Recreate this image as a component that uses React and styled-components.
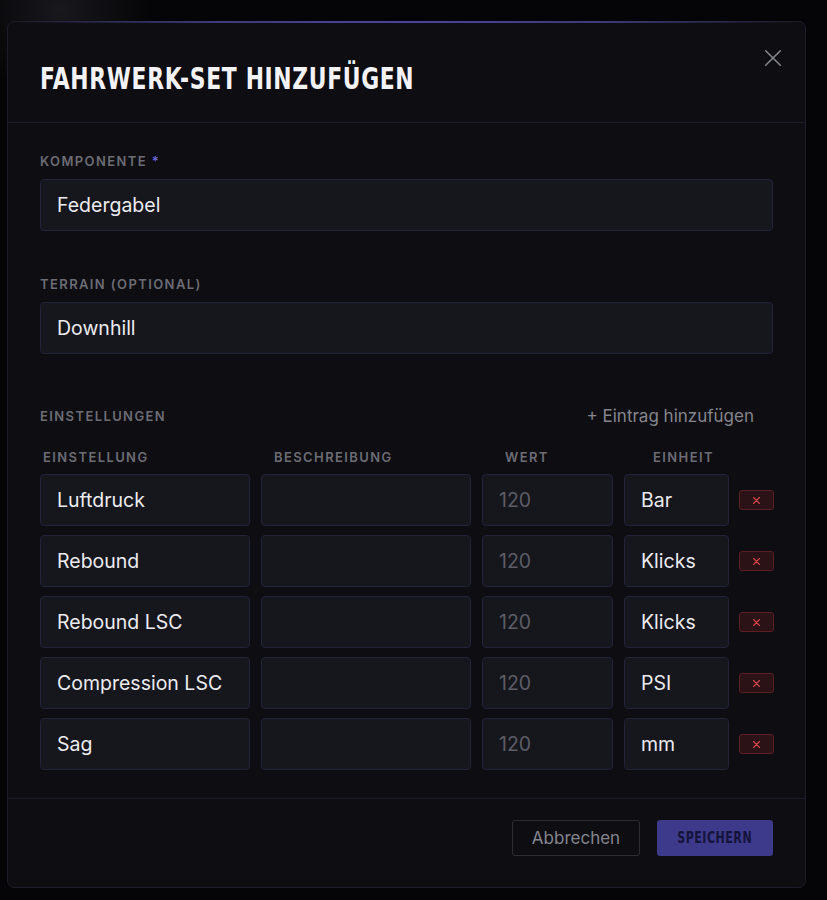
import { createGlobalStyle, styled } from "styled-components";

const GlobalStyle = createGlobalStyle`
  html, body {
    margin: 0;
    padding: 0;
    background: #050507;
    font-family: Inter, "Noto Sans", sans-serif;
  }
`;

const Page = styled.div`
  width: 827px;
  height: 900px;
  padding: 21px 21px 0 7px;
  box-sizing: border-box;
  background: radial-gradient(circle at 60px 10px, rgba(60, 60, 70, 0.35), transparent 90px), #050507;
`;

const Modal = styled.div`
  position: relative;
  width: 799px;
  height: 867px;
  box-sizing: border-box;
  background: #0d0d12;
  border: 1px solid #1d1d29;
  border-radius: 7px;
  display: flex;
  flex-direction: column;

  &::before {
    content: "";
    position: absolute;
    top: -1px;
    left: 10px;
    right: 10px;
    height: 2px;
    background: linear-gradient(90deg, transparent, #3f3a7a 25%, #4a44a0 50%, #3f3a7a 75%, transparent);
  }
`;

const Header = styled.div`
  flex-shrink: 0;
  height: 100px;
  padding: 0 32px;
  display: flex;
  align-items: center;
  justify-content: space-between;
  border-bottom: 1px solid #1c1c2a;
`;

const Title = styled.h1`
  margin: 0;
  padding-top: 12px;
  font-family: "DejaVu Sans Condensed", "Liberation Sans", sans-serif;
  font-weight: 700;
  font-size: 30px;
  letter-spacing: 0.8px;
  color: #f3f3f6;
  text-transform: uppercase;
  transform: scaleX(0.81);
  transform-origin: left center;
  white-space: nowrap;
`;

const Close = styled.button`
  align-self: flex-start;
  margin-top: 25px;
  margin-right: -11px;
  width: 22px;
  height: 22px;
  padding: 0;
  border: none;
  background: none;
  display: flex;
  align-items: center;
  justify-content: center;
`;

const Body = styled.div`
  flex-shrink: 0;
  padding: 31px 32px 28px;
  display: flex;
  flex-direction: column;
  border-bottom: 1px solid #1c1c2a;
`;

const Field = styled.div`
  display: flex;
  flex-direction: column;
  gap: 11px;
  margin-bottom: ${(p) => p.$mb || 0}px;
`;

const Label = styled.div`
  font-size: 13px;
  font-weight: 600;
  letter-spacing: 1.4px;
  color: #6c6c74;
  text-transform: uppercase;
  line-height: 14px;
`;

const Star = styled.span`
  color: #6d68d8;
`;

const Input = styled.div`
  height: 52px;
  box-sizing: border-box;
  padding: 0 16px;
  display: flex;
  align-items: center;
  background: #16161d;
  border: 1px solid #22223a;
  border-radius: 4px;
  font-size: 19.5px;
  color: ${(p) => (p.$muted ? "#5d5d66" : "#ececf0")};
`;

const SectionHead = styled.div`
  display: flex;
  justify-content: space-between;
  align-items: center;
  margin-bottom: 24px;
`;

const AddLink = styled.button`
  border: none;
  background: none;
  padding: 0 19px 0 0;
  font-family: Inter, sans-serif;
  font-size: 17px;
  color: #85858e;
`;

const Grid = styled.div`
  display: grid;
  grid-template-columns: 210px 210px 131px 105px 35px;
  column-gap: 11px;
  row-gap: 9px;
  align-items: center;
`;

const ColHead = styled.div`
  padding-left: ${(p) => p.$pl}px;
  font-size: 13px;
  font-weight: 600;
  letter-spacing: 1.4px;
  color: #6c6c74;
  line-height: 14px;
  margin-bottom: 1px;
`;

const DeleteBtn = styled.button`
  width: 35px;
  height: 20px;
  padding: 0;
  background: #2a1216;
  border: 1px solid #5c1f26;
  border-radius: 3px;
  display: flex;
  align-items: center;
  justify-content: center;
  margin-left: -1px;
`;

const Footer = styled.div`
  padding: 21px 32px 0;
  display: flex;
  justify-content: flex-end;
  gap: 17px;
`;

const CancelBtn = styled.button`
  width: 128px;
  height: 36px;
  background: transparent;
  border: 1px solid #2c2c34;
  border-radius: 3px;
  font-family: Inter, sans-serif;
  font-size: 17px;
  color: #85858e;
`;

const SaveBtn = styled.button`
  width: 116px;
  height: 36px;
  background: #3d3a8c;
  border: none;
  border-radius: 3px;
  display: flex;
  align-items: center;
  justify-content: center;
`;

const SaveText = styled.span`
  display: inline-block;
  font-family: "DejaVu Sans Condensed", "Liberation Sans", sans-serif;
  font-weight: 700;
  font-size: 15px;
  letter-spacing: 0.6px;
  color: #14143a;
  transform: scaleX(0.82);
`;

const rows = [
  { name: "Luftdruck", unit: "Bar" },
  { name: "Rebound", unit: "Klicks" },
  { name: "Rebound LSC", unit: "Klicks" },
  { name: "Compression LSC", unit: "PSI" },
  { name: "Sag", unit: "mm" },
];

const XIcon = ({ size, color, width }) => (
  <svg width={size} height={size} viewBox="0 0 24 24" fill="none" stroke={color} strokeWidth={width} strokeLinecap="round">
    <path d="M4 4L20 20M20 4L4 20" />
  </svg>
);

export default function App() {
  return (
    <Page>
      <GlobalStyle />
      <Modal>
        <Header>
          <Title>Fahrwerk-Set hinzufügen</Title>
          <Close>
            <XIcon size={22} color="#8a8a92" width={1.6} />
          </Close>
        </Header>
        <Body>
          <Field $mb={46}>
            <Label>
              Komponente <Star>*</Star>
            </Label>
            <Input>Federgabel</Input>
          </Field>
          <Field $mb={52}>
            <Label>Terrain (optional)</Label>
            <Input>Downhill</Input>
          </Field>
          <SectionHead>
            <Label>Einstellungen</Label>
            <AddLink>+ Eintrag hinzufügen</AddLink>
          </SectionHead>
          <Grid>
            <ColHead $pl={3}>EINSTELLUNG</ColHead>
            <ColHead $pl={13}>BESCHREIBUNG</ColHead>
            <ColHead $pl={23}>WERT</ColHead>
            <ColHead $pl={29}>EINHEIT</ColHead>
            <div />
            {rows.map((r) => (
              <>
                <Input>{r.name}</Input>
                <Input />
                <Input $muted>120</Input>
                <Input>{r.unit}</Input>
                <DeleteBtn>
                  <XIcon size={9} color="#d9464a" width={3} />
                </DeleteBtn>
              </>
            ))}
          </Grid>
        </Body>
        <Footer>
          <CancelBtn>Abbrechen</CancelBtn>
          <SaveBtn>
            <SaveText>SPEICHERN</SaveText>
          </SaveBtn>
        </Footer>
      </Modal>
    </Page>
  );
}
